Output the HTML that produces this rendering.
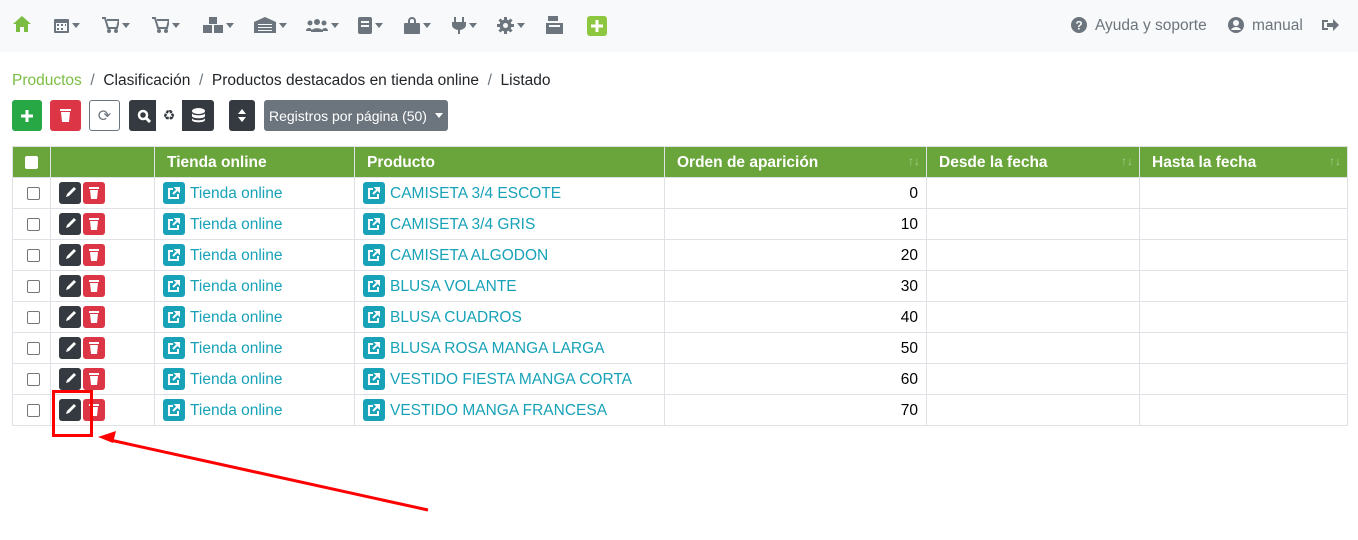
<!DOCTYPE html>
<html><head><meta charset="utf-8"><style>
*{box-sizing:border-box}
body{margin:0;width:1358px;height:540px;background:#fff;font-family:"Liberation Sans",sans-serif;position:relative;overflow:hidden}
.nav{position:absolute;left:0;top:0;width:1358px;height:52px;background:#f8f9fa}
.ic{position:absolute;top:16px;height:18px;display:flex;align-items:center;color:#6c757d}
.car{display:inline-block;width:0;height:0;border-left:4px solid transparent;border-right:4px solid transparent;border-top:5px solid #6c757d;margin-left:3px}
.bc{position:absolute;left:12px;top:72px;font-size:15.5px;color:#212529}
.btn{position:absolute;top:100px;height:31px;border-radius:3px;display:flex;align-items:center;justify-content:center;color:#fff;font-size:14px}
table{position:absolute;left:12px;top:146px;border-collapse:collapse;font-size:15.5px;table-layout:fixed}
td,th{border:1px solid #dee2e6;height:31px;padding:2px 8px 0}
th{background:#6aa53b;color:#fff;text-align:left;font-weight:bold;padding-left:12px;position:relative}
th .s{position:absolute;right:6px;top:7px;color:#a8cf8c;font-size:12px;font-weight:normal}
td a{color:#17a2b8;text-decoration:none}
.cb{display:inline-block;width:13px;height:13px;border:1px solid #767676;border-radius:2px;vertical-align:middle}
.sq{display:inline-block;width:22px;height:22px;border-radius:3px;vertical-align:middle;position:relative;top:-1px}
.ed{background:#343a40}.dl{background:#dc3545;margin-left:2px}.lk{background:#17a2b8;margin-right:5px}
</style></head><body>
<div class="nav">
<svg style="position:absolute;left:12px;top:15px" width="20" height="18" viewBox="0 0 20 18"><path d="M10 1L1 9h3v8h4v-5h4v5h4V9h3z" fill="#7bbd43"/></svg>
<div class="ic" style="left:54px"><svg width="15" height="16"><rect x="0" y="2" width="15" height="14" rx="1" fill="#6c757d"/><rect x="2" y="6" width="11" height="8" fill="#f8f9fa"/><rect x="3" y="7" width="2" height="2" fill="#6c757d"/><rect x="7" y="7" width="2" height="2" fill="#6c757d"/><rect x="11" y="7" width="1" height="2" fill="#6c757d"/><rect x="3" y="11" width="2" height="2" fill="#6c757d"/><rect x="7" y="11" width="2" height="2" fill="#6c757d"/></svg><span class="car"></span></div>
<div class="ic" style="left:102px"><svg width="17" height="16"><path d="M0 1h3l3 10h9l2-8H5" stroke="#6c757d" stroke-width="2" fill="none"/><circle cx="7" cy="14" r="2" fill="#6c757d"/><circle cx="14" cy="14" r="2" fill="#6c757d"/></svg><span class="car"></span></div>
<div class="ic" style="left:152px"><svg width="17" height="16"><path d="M0 1h3l3 10h9l2-8H5" stroke="#6c757d" stroke-width="2" fill="none"/><circle cx="7" cy="14" r="2" fill="#6c757d"/><circle cx="14" cy="14" r="2" fill="#6c757d"/></svg><span class="car"></span></div>
<div class="ic" style="left:203px"><svg width="20" height="16"><rect x="0" y="8" width="9" height="8" fill="#6c757d"/><rect x="11" y="8" width="9" height="8" fill="#6c757d"/><rect x="6" y="0" width="8" height="7" fill="#6c757d"/></svg><span class="car"></span></div>
<div class="ic" style="left:254px"><svg width="22" height="16"><path d="M0 5L11 0l11 5v11H0z" fill="#6c757d"/><rect x="4" y="7" width="14" height="9" fill="#f8f9fa"/><rect x="4" y="8" width="14" height="2" fill="#6c757d"/><rect x="4" y="11" width="14" height="2" fill="#6c757d"/><rect x="4" y="14" width="14" height="2" fill="#6c757d"/></svg><span class="car"></span></div>
<div class="ic" style="left:306px"><svg width="22" height="14"><circle cx="11" cy="4" r="3" fill="#6c757d"/><circle cx="4" cy="5" r="2.5" fill="#6c757d"/><circle cx="18" cy="5" r="2.5" fill="#6c757d"/><path d="M5 14c0-5 12-5 12 0z M0 13c0-4 6-4 6 0z M16 13c0-4 6-4 6 0z" fill="#6c757d"/></svg><span class="car"></span></div>
<div class="ic" style="left:358px"><svg width="14" height="17"><rect x="0" y="0" width="14" height="17" rx="2" fill="#6c757d"/><rect x="3" y="4" width="8" height="2" fill="#f8f9fa"/><rect x="3" y="8" width="8" height="2" fill="#f8f9fa"/></svg><span class="car"></span></div>
<div class="ic" style="left:404px"><svg width="16" height="17"><path d="M5 6V4a3 3 0 016 0v2" stroke="#6c757d" stroke-width="2" fill="none"/><rect x="0" y="6" width="16" height="11" rx="1" fill="#6c757d"/></svg><span class="car"></span></div>
<div class="ic" style="left:452px"><svg width="14" height="17"><rect x="2" y="0" width="2" height="5" fill="#6c757d"/><rect x="10" y="0" width="2" height="5" fill="#6c757d"/><path d="M0 5h14v3a7 5 0 01-6 5v4H6v-4a7 5 0 01-6-5z" fill="#6c757d"/></svg><span class="car"></span></div>
<div class="ic" style="left:497px"><svg width="17" height="17"><circle cx="8.5" cy="8.5" r="6" fill="#6c757d"/><path d="M8.5 0v17M0 8.5h17M2.5 2.5l12 12M14.5 2.5l-12 12" stroke="#6c757d" stroke-width="3"/><circle cx="8.5" cy="8.5" r="2.5" fill="#f8f9fa"/></svg><span class="car"></span></div>
<div class="ic" style="left:546px"><svg width="17" height="18"><rect x="2" y="0" width="10" height="5" fill="#6c757d"/><rect x="0" y="7" width="17" height="11" fill="#6c757d"/><rect x="3" y="9" width="11" height="2" fill="#f8f9fa"/></svg></div>
<svg style="position:absolute;left:587px;top:16px" width="20" height="20"><rect width="20" height="20" rx="3" fill="#8dc63f"/><path d="M10 4v12M4 10h12" stroke="#fff" stroke-width="3"/></svg>
<svg style="position:absolute;left:1071px;top:17px" width="16" height="16"><circle cx="8" cy="8" r="8" fill="#6c757d"/><text x="8" y="12.5" font-size="12" font-weight="bold" text-anchor="middle" fill="#f8f9fa" font-family="Liberation Sans">?</text></svg>
<div style="position:absolute;left:1095px;top:17px;font-size:15.5px;color:#6c757d">Ayuda y soporte</div>
<svg style="position:absolute;left:1228px;top:17px" width="16" height="16"><circle cx="8" cy="8" r="8" fill="#6c757d"/><circle cx="8" cy="6" r="3" fill="#f8f9fa"/><path d="M3 13c2-4 8-4 10 0" fill="#f8f9fa"/></svg>
<div style="position:absolute;left:1252px;top:17px;font-size:15.5px;color:#6c757d">manual</div>
<svg style="position:absolute;left:1322px;top:18px" width="17" height="14"><path d="M0 2h6v2H2v6h4v2H0z" fill="#6c757d"/><path d="M5 5h6V1l6 6-6 6V9H5z" fill="#6c757d"/></svg>
</div>
<div class="bc"><span style="color:#7bbd43">Productos</span> <span style="color:#6c757d">&nbsp;/&nbsp;</span> Clasificación <span style="color:#6c757d">&nbsp;/&nbsp;</span> Productos destacados en tienda online <span style="color:#6c757d">&nbsp;/&nbsp;</span> Listado</div>
<div class="btn" style="left:12px;width:30px;background:#28a745"><svg width="12" height="12"><path d="M6 0v12M0 6h12" stroke="#fff" stroke-width="3"/></svg></div>
<div class="btn" style="left:50px;width:31px;background:#dc3545"><svg width="11" height="13"><rect x="0" y="0" width="11" height="2" fill="#fff"/><path d="M1 3h9l-1 10H2z" fill="#fff"/></svg></div>
<div class="btn" style="left:89px;width:31px;border:1px solid #6c757d;color:#6c757d;font-size:16px">⟳</div>
<div class="btn" style="left:129px;width:85px;background:#343a40;justify-content:flex-start">
<svg style="margin-left:8px" width="14" height="14"><circle cx="6" cy="6" r="4" stroke="#fff" stroke-width="2.5" fill="none"/><path d="M9 9l4 4" stroke="#fff" stroke-width="3"/></svg>
<div style="position:absolute;left:27px;top:0;width:26px;height:31px;background:#fff;color:#343a40;font-size:14px;text-align:center;line-height:31px">♻</div>
<svg style="position:absolute;left:63px;top:8px" width="13" height="15"><ellipse cx="6.5" cy="3" rx="6.5" ry="3" fill="#fff"/><path d="M0 5c0 3 13 3 13 0v3c0 3-13 3-13 0zM0 10c0 3 13 3 13 0v2c0 3-13 3-13 0z" fill="#fff"/></svg></div>
<div class="btn" style="left:229px;width:26px;background:#343a40"><svg width="8" height="13"><path d="M4 0l4 5H0zM4 13l4-5H0z" fill="#fff"/></svg></div>
<div class="btn" style="left:264px;width:184px;background:#6c757d">Registros por página (50)<span class="car" style="border-top-color:#fff;margin-left:8px"></span></div>
<table>
<tr><th style="width:38px;padding-left:12px"><span class="cb" style="background:#fff;border-color:#fff"></span></th><th style="width:104px"></th><th style="width:200px">Tienda online</th><th style="width:310px">Producto</th><th style="width:262px">Orden de aparición<span class="s">↑↓</span></th><th style="width:213px">Desde la fecha<span class="s">↑↓</span></th><th style="width:208px">Hasta la fecha<span class="s">↑↓</span></th></tr>
</table>
<table style="top:177px">
</table>
<script>
var p=["CAMISETA 3/4 ESCOTE","CAMISETA 3/4 GRIS","CAMISETA ALGODON","BLUSA VOLANTE","BLUSA CUADROS","BLUSA ROSA MANGA LARGA","VESTIDO FIESTA MANGA CORTA","VESTIDO MANGA FRANCESA"];
var lk='<span class="sq lk"><svg style="position:absolute;left:5px;top:5px" width="12" height="12"><path d="M5 2H1v9h9V7" stroke="#fff" stroke-width="2" fill="none"/><path d="M7 0h5v5zM11 1L5 7" stroke="#fff" stroke-width="2" fill="#fff"/></svg></span>';
var h='';p.forEach(function(x,i){h+='<tr><td style="width:38px;padding-left:14px"><span class="cb"></span></td><td style="width:104px;padding-left:8px"><span class="sq ed"><svg style="position:absolute;left:6px;top:5px" width="11" height="11"><path d="M9 0l2 2-7 7-3 1 1-3z" fill="#fff"/></svg></span><span class="sq dl"><svg style="position:absolute;left:6px;top:5px" width="10" height="12"><rect width="10" height="2" fill="#fff"/><path d="M1 3h8l-1 9H2z" fill="#fff"/></svg></span></td><td style="width:200px">'+lk+'<a>Tienda online</a></td><td style="width:310px">'+lk+'<a>'+x+'</a></td><td style="width:262px;text-align:right">'+(i*10)+'</td><td style="width:213px"></td><td style="width:208px"></td></tr>'});
document.querySelectorAll('table')[1].innerHTML=h;
</script>
<div style="position:absolute;left:52px;top:390px;width:41px;height:47px;border:3px solid #f00"></div>
<svg style="position:absolute;left:0;top:0" width="1358" height="540"><line x1="428" y1="510" x2="110" y2="440" stroke="#f00" stroke-width="3"/><path d="M98 437l18-6-3 12z" fill="#f00"/></svg>
</body></html>
